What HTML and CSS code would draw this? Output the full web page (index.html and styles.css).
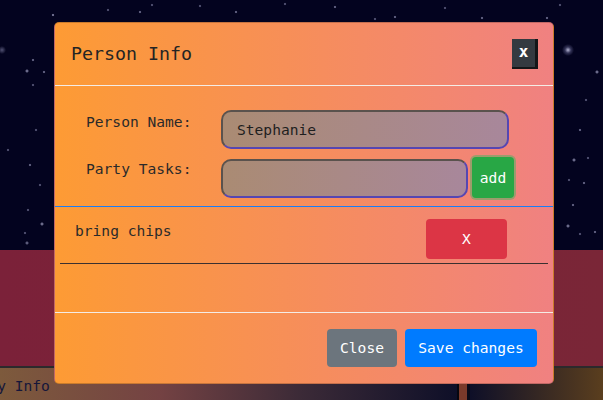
FILE: index.html
```html
<!DOCTYPE html>
<html>
<head>
<meta charset="utf-8">
<title>Person Info</title>
<link rel="stylesheet" href="styles.css">
</head>
<body>
<div class="page">
  <div class="sky"></div>
  <div class="band"></div>
  <div class="strip">
    <div class="card-left"><span class="card-title">Party Info</span></div>
    <div class="sep"></div>
    <div class="card-right"></div>
  </div>
</div>

<div class="modal">
  <div class="modal-content">
    <div class="modal-header">
      <h5 class="modal-title">Person Info</h5>
      <button class="btn-x" type="button">x</button>
    </div>
    <div class="modal-body">
      <form class="person-form">
        <div class="form-row">
          <label class="form-label">Person Name:</label>
          <input class="field field-name" type="text" value="Stephanie">
        </div>
        <div class="form-row row-center">
          <label class="form-label">Party Tasks:</label>
          <input class="field field-task" type="text" value="">
          <button class="btn btn-add" type="button">add</button>
        </div>
      </form>
      <ul class="tasks">
        <li class="task">
          <span class="task-name">bring chips</span>
          <button class="btn btn-del" type="button">X</button>
        </li>
      </ul>
    </div>
    <div class="modal-footer">
      <button class="btn btn-close" type="button">Close</button>
      <button class="btn btn-save" type="button">Save changes</button>
    </div>
  </div>
</div>
</body>
</html>
```
FILE: styles.css
```css
* { box-sizing: border-box; }

html, body {
  margin: 0;
  padding: 0;
  width: 603px;
  height: 400px;
  overflow: hidden;
}

body {
  font-family: "DejaVu Sans Mono", "Liberation Mono", monospace;
  font-size: 14.6px;
  line-height: 24px;
  color: #212529;
  background: #03031f;
}

.page {
  display: flex;
  flex-direction: column;
  height: 400px;
}

.sky {
  height: 250px;
  background-color: #03031f;
  background-image:
    radial-gradient(circle at 568px 50px, rgba(200,200,230,.9) 0, rgba(140,140,190,.35) 3px, transparent 6px),
    radial-gradient(circle at 2px 50px, rgba(160,160,200,.5) 0, transparent 4px),
    radial-gradient(circle at 53px 15px, #6a6a8a 0 1px, transparent 1.6px),
    radial-gradient(circle at 33px 60px, #5a5a7a 0 1px, transparent 1.6px),
    radial-gradient(circle at 27px 71px, #6a6a8a 0 1.2px, transparent 1.8px),
    radial-gradient(circle at 44px 72px, #5a5a7a 0 1px, transparent 1.6px),
    radial-gradient(circle at 33px 85px, #4a4a6a 0 1px, transparent 1.6px),
    radial-gradient(circle at 36px 130px, #4a4a6a 0 1px, transparent 1.6px),
    radial-gradient(circle at 8px 150px, #4a4a6a 0 1px, transparent 1.6px),
    radial-gradient(circle at 30px 165px, #5a5a7a 0 1px, transparent 1.6px),
    radial-gradient(circle at 40px 185px, #4a4a6a 0 1px, transparent 1.6px),
    radial-gradient(circle at 28px 210px, #4a4a6a 0 1px, transparent 1.6px),
    radial-gradient(circle at 42px 224px, #6a6a8a 0 1.2px, transparent 1.8px),
    radial-gradient(circle at 25px 233px, #4a4a6a 0 1px, transparent 1.6px),
    radial-gradient(circle at 27px 243px, #5a5a7a 0 1.2px, transparent 1.8px),
    radial-gradient(circle at 140px 12px, #5a5a7a 0 1px, transparent 1.6px),
    radial-gradient(circle at 152px 5px, #4a4a6a 0 1px, transparent 1.6px),
    radial-gradient(circle at 108px 10px, #4a4a6a 0 1px, transparent 1.6px),
    radial-gradient(circle at 200px 6px, #4a4a6a 0 1px, transparent 1.6px),
    radial-gradient(circle at 236px 12px, #5a5a7a 0 1px, transparent 1.6px),
    radial-gradient(circle at 285px 4px, #4a4a6a 0 1px, transparent 1.6px),
    radial-gradient(circle at 335px 7px, #5a5a7a 0 1px, transparent 1.6px),
    radial-gradient(circle at 375px 19px, #4a4a6a 0 1px, transparent 1.6px),
    radial-gradient(circle at 395px 17px, #5a5a7a 0 1px, transparent 1.6px),
    radial-gradient(circle at 445px 8px, #4a4a6a 0 1px, transparent 1.6px),
    radial-gradient(circle at 482px 18px, #5a5a7a 0 1px, transparent 1.6px),
    radial-gradient(circle at 547px 18px, #5a5a7a 0 1px, transparent 1.6px),
    radial-gradient(circle at 560px 5px, #4a4a6a 0 1px, transparent 1.6px),
    radial-gradient(circle at 597px 72px, #6a6a8a 0 1.2px, transparent 1.8px),
    radial-gradient(circle at 586px 100px, #4a4a6a 0 1px, transparent 1.6px),
    radial-gradient(circle at 580px 130px, #5a5a7a 0 1px, transparent 1.6px),
    radial-gradient(circle at 574px 160px, #6a6a8a 0 1.2px, transparent 1.8px),
    radial-gradient(circle at 588px 158px, #4a4a6a 0 1px, transparent 1.6px),
    radial-gradient(circle at 569px 180px, #4a4a6a 0 1px, transparent 1.6px),
    radial-gradient(circle at 584px 183px, #5a5a7a 0 1px, transparent 1.6px),
    radial-gradient(circle at 573px 205px, #5a5a7a 0 1px, transparent 1.6px),
    radial-gradient(circle at 568px 226px, #6a6a8a 0 1.2px, transparent 1.8px),
    radial-gradient(circle at 595px 232px, #5a5a7a 0 1px, transparent 1.6px),
    radial-gradient(circle at 580px 234px, #4a4a6a 0 1px, transparent 1.6px);
  background-repeat: no-repeat;
}

.band {
  height: 118px;
  background: linear-gradient(to right, #7b2139, #7a2637);
  border-bottom: 2px solid #2b2a2c;
}

.strip {
  flex: 1;
  display: flex;
}

.card-left {
  width: 457px;
  padding-top: 6px;
  background: linear-gradient(to right, #7d5a3c 0%, #744243 35%, #3b2a37 66%, #0e0f28 100%);
  overflow: hidden;
  white-space: nowrap;
}

.card-title {
  display: inline-block;
  margin-left: -38px;
  color: #15163a;
}

.sep {
  width: 13px;
  border-left: 2px solid #06060f;
  border-right: 3px solid #0a0a18;
  background: #7a3a2a;
}

.card-right {
  flex: 1;
  background: linear-gradient(to right, #0e0f28, #5a3e1e);
}

/* modal overlay */
.modal {
  position: absolute;
  top: 22px;
  left: 54px;
  width: 500px;
}

.modal-content {
  border: 1px solid rgba(0, 0, 0, .2);
  border-radius: 5px;
  background-image: linear-gradient(to right, #fd9b34, #f08181);
}

.modal-header {
  display: flex;
  align-items: center;
  justify-content: space-between;
  padding: 16px 15px 16px 16px;
  border-bottom: 1px solid #f4ece6;
}

.modal-title {
  margin: 0;
  font-size: 18.3px;
  font-weight: normal;
  line-height: 24px;
  color: #242424;
}

.btn-x {
  width: 26px;
  height: 30px;
  padding: 0 0 3px;
  border: 0;
  border-right: 3px solid #141618;
  border-bottom: 2px solid #141618;
  background: #343a40;
  color: #fff;
  font-family: "DejaVu Sans Mono", monospace;
  font-size: 16px;
  font-weight: bold;
  line-height: 24px;
}

.person-form {
  padding: 24px 0 8px 31px;
  border-bottom: 1px solid #1a7df5;
}

.form-row {
  display: flex;
  align-items: flex-start;
}

.form-row + .form-row {
  margin-top: 8px;
}

.row-center {
  align-items: center;
}

.row-center .form-label {
  align-self: flex-start;
}

.form-label {
  width: 135px;
  flex: none;
  line-height: 24px;
  color: #2a2a2a;
}

.field {
  height: 39px;
  padding: 0 14px;
  border: 2px solid;
  border-color: #5a524d #5646b2 #5646b2 #5a524d;
  border-radius: 10px;
  background: linear-gradient(to right, #aa8b73, #a8879b);
  font: inherit;
  color: #1e1e1e;
  outline: none;
}

.field-name { width: 288px; }

.field-task {
  width: 247px;
  margin-top: 1px;
}

.btn {
  font-family: inherit;
  font-size: inherit;
  line-height: 24px;
  color: #fff;
  border: 1px solid transparent;
  border-radius: 4px;
}

.btn-add {
  width: 42px;
  height: 41px;
  margin-left: 4px;
  padding: 0;
  background: #28a745;
  box-shadow: 0 0 0 2px rgba(72, 180, 97, .5);
}

.tasks {
  list-style: none;
  margin: 0 5px;
  padding: 0;
}

.task {
  display: flex;
  align-items: flex-start;
  padding: 12px 41px 4px 15px;
  border-bottom: 1px solid #3a3030;
  margin-bottom: 48px;
}

.task-name {
  flex: 1;
  color: #2a2a2a;
}

.btn-del {
  width: 81px;
  height: 40px;
  padding: 0;
  background: #dc3545;
}

.modal-footer {
  display: flex;
  justify-content: flex-end;
  align-items: center;
  padding: 12px;
  border-top: 1px solid #f4ece6;
}

.modal-footer .btn {
  height: 38px;
  margin: 4px;
  padding: 6px 12px;
}

.btn-close {
  width: 70px;
  background: #6c757d;
}

.btn-save {
  width: 132px;
  background: #007bff;
}
```
